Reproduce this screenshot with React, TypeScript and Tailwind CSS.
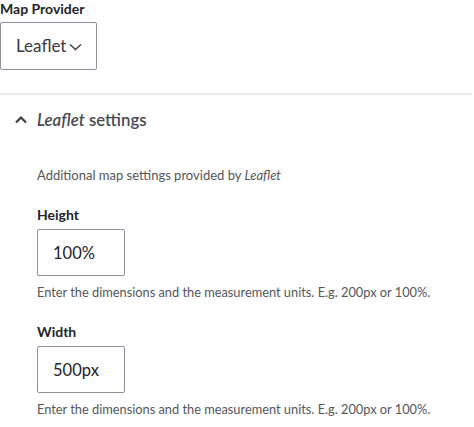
import { useState } from 'react';

export default function App() {
  const [open, setOpen] = useState(true);
  const [height, setHeight] = useState('100%');
  const [width, setWidth] = useState('500px');

  const help = 'Enter the dimensions and the measurement units. E.g. 200px or 100%.';

  return (
    <div className="w-[474px] h-[427px] overflow-hidden bg-white text-[#222330]" style={{ fontFamily: 'Lato, "Noto Sans", sans-serif' }}>
      {/* Provider select */}
      <div className="pt-[1px]">
        <label className="block text-[14px] font-bold leading-[16px] text-[#232429]">Map Provider</label>
        <div className="mt-[5px] w-[97px] h-[48px] border border-[#8e929c] rounded-[2px] flex items-center pl-[15px] text-[17px] text-[#393a42]">
          <span>Leaflet</span>
          <svg className="ml-[3px] mt-[1px]" width="13" height="8" viewBox="0 0 13 8" fill="none" stroke="#444" strokeWidth="1.6">
            <path d="M1 1.5l5.5 5 5.5-5" />
          </svg>
        </div>
      </div>

      {/* Details */}
      <div className="mt-[23px] border-t-2 border-[#ececec] w-[472px]">
        <button
          type="button"
          onClick={() => setOpen(!open)}
          className="flex items-center h-[49px] pl-[15px] text-[16.8px] text-[#4a4b52]"
        >
          <svg width="12" height="9" viewBox="0 0 12 9" fill="none" stroke="#3b3c42" strokeWidth="2.2">
            <path d="M1 7.5l5-5 5 5" />
          </svg>
          <span className="ml-[10px]">
            <em className="font-semibold">Leaflet</em><span className="font-semibold"> settings</span>
          </span>
        </button>

        {open && (
          <div className="pl-[37px] pt-[1px]">
            <p className="text-[13px] leading-[14px] text-[#55565b] mt-[23px]">
              Additional map settings provided by <em>Leaflet</em>
            </p>

            <div className="mt-[25px]">
              <label className="block text-[14px] font-bold leading-[16px] text-[#232429]">Height</label>
              <input
                value={height}
                onChange={(e) => setHeight(e.target.value)}
                className="mt-[6px] w-[88px] h-[47px] border border-[#8e929c] rounded-[2px] px-[15px] text-[16.5px] text-[#232429] outline-none"
              />
              <p className="mt-[9px] text-[12.8px] leading-[14px] text-[#55565b]">{help}</p>
            </div>

            <div className="mt-[25px]">
              <label className="block text-[14px] font-bold leading-[16px] text-[#232429]">Width</label>
              <input
                value={width}
                onChange={(e) => setWidth(e.target.value)}
                className="mt-[6px] w-[88px] h-[47px] border border-[#8e929c] rounded-[2px] px-[15px] text-[16.5px] text-[#232429] outline-none"
              />
              <p className="mt-[9px] text-[12.8px] leading-[14px] text-[#55565b]">{help}</p>
            </div>
          </div>
        )}
      </div>
    </div>
  );
}
